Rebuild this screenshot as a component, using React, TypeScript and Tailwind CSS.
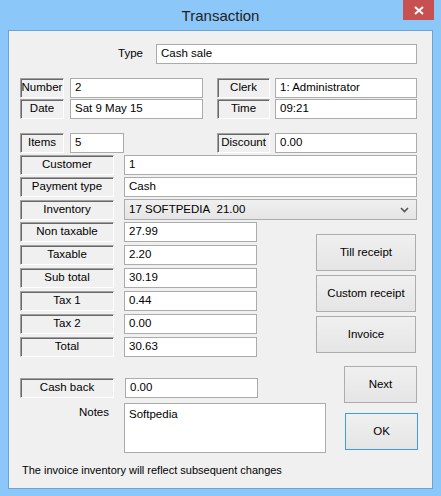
import React from 'react';

const font = { fontFamily: '"Liberation Sans", Arial, sans-serif' };

function Label({ text, w }: { text: string; w: string }) {
  return (
    <div
      className={`${w} h-[20px] flex items-center justify-center border border-t-[#a0a0a0] border-l-[#a0a0a0] border-b-white border-r-white shadow-[inset_1px_1px_0_#696969] text-[11.5px] text-black leading-none`}
    >
      {text}
    </div>
  );
}

function Field({ value, w, h = 'h-[20px]' }: { value: string; w: string; h?: string }) {
  return (
    <div className={`${w} ${h} bg-white border border-[#ababab] px-[4px] flex items-center text-[11.5px] text-black leading-none`}>
      {value}
    </div>
  );
}

function Button({ text, w, blue }: { text: string; w: string; blue?: boolean }) {
  return (
    <div
      className={`${w} h-[37px] flex items-center justify-center border ${blue ? 'border-[#3c9bf0]' : 'border-[#adadad]'} bg-gradient-to-b from-[#f0f0f0] to-[#e5e5e5] text-[11.5px] text-black`}
    >
      {text}
    </div>
  );
}

export default function App() {
  const totals = [
    { label: 'Non taxable', value: '27.99' },
    { label: 'Taxable', value: '2.20' },
    { label: 'Sub total', value: '30.19' },
    { label: 'Tax 1', value: '0.44' },
    { label: 'Tax 2', value: '0.00' },
    { label: 'Total', value: '30.63' },
  ];

  return (
    <div className="w-[441px] h-[496px] bg-[#8cc7f9] flex flex-col overflow-hidden" style={font}>
      {/* title bar */}
      <div className="relative h-[30px] shrink-0 flex items-center justify-center pt-[2px]">
        <span className="text-[15px] text-[#222]">Transaction</span>
        <div className="absolute top-0 right-[7px] w-[31px] h-[20px] bg-[#c75050] flex items-center justify-center">
          <svg width="10" height="9" viewBox="0 0 10 9">
            <path d="M1 1 L9 8 M9 1 L1 8" stroke="white" strokeWidth="2" />
          </svg>
        </div>
      </div>

      {/* client area */}
      <div className="mx-[8px] h-[459px] border border-[#6ca3d4] bg-[#f0f0f0] flex flex-col">
        {/* type */}
        <div className="mt-[13px] flex items-center h-[20px]">
          <span className="w-[134px] text-right text-[11.5px] text-black">Type</span>
          <div className="ml-[13px]">
            <Field value="Cash sale" w="w-[261px]" />
          </div>
        </div>

        {/* number / date / clerk / time */}
        <div className="mt-[14px] flex flex-col gap-[1px]">
          <div className="flex items-center">
            <div className="ml-[11px]"><Label text="Number" w="w-[44px]" /></div>
            <div className="ml-[6px]"><Field value="2" w="w-[133px]" /></div>
            <div className="ml-[14px]"><Label text="Clerk" w="w-[53px]" /></div>
            <div className="ml-[5px]"><Field value="1: Administrator" w="w-[142px]" /></div>
          </div>
          <div className="flex items-center">
            <div className="ml-[11px]"><Label text="Date" w="w-[44px]" /></div>
            <div className="ml-[6px]"><Field value="Sat 9 May 15" w="w-[133px]" /></div>
            <div className="ml-[14px]"><Label text="Time" w="w-[53px]" /></div>
            <div className="ml-[5px]"><Field value="09:21" w="w-[142px]" /></div>
          </div>
        </div>

        {/* items / discount */}
        <div className="mt-[14px] flex items-center">
          <div className="ml-[11px]"><Label text="Items" w="w-[44px]" /></div>
          <div className="ml-[6px]"><Field value="5" w="w-[54px]" /></div>
          <div className="ml-[93px]"><Label text="Discount" w="w-[53px]" /></div>
          <div className="ml-[5px]"><Field value="0.00" w="w-[142px]" /></div>
        </div>

        {/* customer / payment / inventory */}
        <div className="mt-[2px] flex flex-col gap-[2px]">
          <div className="flex items-center">
            <div className="ml-[11px]"><Label text="Customer" w="w-[94px]" /></div>
            <div className="ml-[10px]"><Field value="1" w="w-[293px]" /></div>
          </div>
          <div className="flex items-center">
            <div className="ml-[11px]"><Label text="Payment type" w="w-[94px]" /></div>
            <div className="ml-[10px]"><Field value="Cash" w="w-[293px]" /></div>
          </div>
          <div className="flex items-center">
            <div className="ml-[11px]"><Label text="Inventory" w="w-[94px]" /></div>
            <div className="ml-[10px] w-[293px] h-[21px] border border-[#acacac] bg-gradient-to-b from-[#f0f0f0] to-[#e5e5e5] flex items-center justify-between px-[4px] text-[11.5px] text-black">
              <span>17 SOFTPEDIA&nbsp;&nbsp;21.00</span>
              <svg width="9" height="6" viewBox="0 0 9 6" className="mr-[3px]">
                <path d="M1 1 L4.5 4.5 L8 1" stroke="#555" strokeWidth="1.6" fill="none" />
              </svg>
            </div>
          </div>
        </div>

        {/* totals + receipt buttons */}
        <div className="mt-[2px] flex">
          <div className="flex flex-col gap-[3px]">
            {totals.map((t) => (
              <div key={t.label} className="flex items-center">
                <div className="ml-[11px]"><Label text={t.label} w="w-[94px]" /></div>
                <div className="ml-[10px]"><Field value={t.value} w="w-[133px]" /></div>
              </div>
            ))}
          </div>
          <div className="ml-[59px] mt-[12px] flex flex-col gap-[4px]">
            <Button text="Till receipt" w="w-[100px]" />
            <Button text="Custom receipt" w="w-[100px]" />
            <Button text="Invoice" w="w-[100px]" />
          </div>
        </div>

        {/* cash back / notes / next / ok */}
        <div className="mt-[9px] flex">
          <div className="flex flex-col">
            <div className="mt-[12px] flex items-center">
              <div className="ml-[11px]"><Label text="Cash back" w="w-[94px]" /></div>
              <div className="ml-[11px]"><Field value="0.00" w="w-[133px]" /></div>
            </div>
            <div className="mt-[5px] flex items-start">
              <span className="w-[100px] text-right text-[11.5px] text-black mt-[1px]">Notes</span>
              <div className="ml-[15px] w-[202px] h-[50px] bg-white border border-[#ababab] px-[4px] pt-[2px] text-[11.5px] text-black">
                Softpedia
              </div>
            </div>
          </div>
          <div className="ml-[18px] flex flex-col">
            <Button text="Next" w="w-[73px]" />
            <div className="mt-[10px] ml-[1px]">
              <Button text="OK" w="w-[73px]" blue />
            </div>
          </div>
        </div>

        <div className="mt-[9px] ml-[13px] text-[11px] text-black">
          The invoice inventory will reflect subsequent changes
        </div>
      </div>
    </div>
  );
}
